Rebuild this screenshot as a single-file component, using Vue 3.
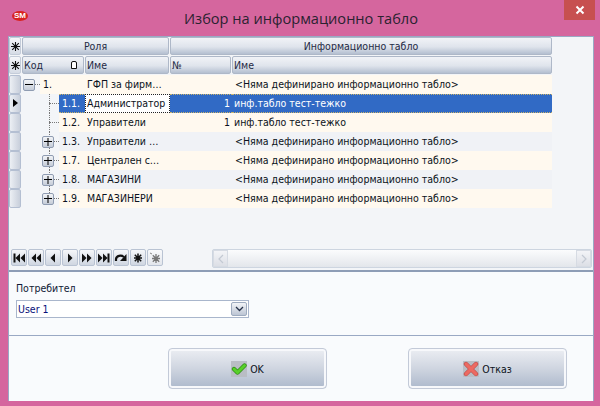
<script setup>
const rows = [
  { id: 'r1', code: '1.', name: 'ГФП за фирм…', num: '', dash: '<Няма дефинирано информационно табло>', level: 0, box: 'minus', tone: 'cream' },
  { id: 'r2', code: '1.1.', name: 'Администратор', num: '1', dash: 'инф.табло тест-тежко', level: 1, box: '', tone: 'sel', current: true },
  { id: 'r3', code: '1.2.', name: 'Управители', num: '1', dash: 'инф.табло тест-тежко', level: 1, box: '', tone: 'cream' },
  { id: 'r4', code: '1.3.', name: 'Управители …', num: '', dash: '<Няма дефинирано информационно табло>', level: 1, box: 'plus', tone: 'grey' },
  { id: 'r5', code: '1.7.', name: 'Централен с…', num: '', dash: '<Няма дефинирано информационно табло>', level: 1, box: 'plus', tone: 'cream' },
  { id: 'r6', code: '1.8.', name: 'МАГАЗИНИ', num: '', dash: '<Няма дефинирано информационно табло>', level: 1, box: 'plus', tone: 'grey' },
  { id: 'r7', code: '1.9.', name: 'МАГАЗИНЕРИ', num: '', dash: '<Няма дефинирано информационно табло>', level: 1, box: 'plus', tone: 'cream', last: true },
]
const navIcons = [
  'M1.500 2.500h2v9h-2zM8 2.500v9L3.500 7zM13 2.500v9L8.500 7z',
  'M7 2.500v9L2.500 7zM12 2.500v9L7.500 7z',
  'M9 2.500v9L4.500 7z',
  'M5 2.500v9L9.500 7z',
  'M2 2.500v9L6.500 7zM7 2.500v9L11.500 7z',
  'M1 2.500v9L5.500 7zM6 2.500v9L10.500 7zM10.500 2.500h2v9h-2z',
]
</script>

<template>
  <div class="window">
    <header class="titlebar">
      <span class="logo">SM</span>
      <h1 class="title">Избор на информационно табло</h1>
      <span class="close">
        <svg width="10" height="10" viewBox="0 0 10 10"><path d="M1.500 1.500l7 7M8.500 1.500l-7 7" stroke="#fff" stroke-width="2" /></svg>
      </span>
    </header>

    <main class="client">
      <section class="gridpanel">
        <div class="headrow">
          <span class="corner">
            <svg width="9" height="9" viewBox="0 0 9 9"><path d="M4.500 0v9M0 4.500h9M1.200 1.200l6.600 6.600M7.800 1.200L1.200 7.800" stroke="#111" stroke-width="1.100" /></svg>
          </span>
          <span class="hcell band-role">Роля</span>
          <span class="hcell band-dash">Информационно табло</span>
        </div>
        <div class="headrow">
          <span class="corner">
            <svg width="9" height="9" viewBox="0 0 9 9"><path d="M4.500 0v9M0 4.500h9M1.200 1.200l6.600 6.600M7.800 1.200L1.200 7.800" stroke="#111" stroke-width="1.100" /></svg>
          </span>
          <span class="hcell col-code left">Код<i class="sort"></i></span>
          <span class="hcell col-name left">Име</span>
          <span class="hcell col-num left">№</span>
          <span class="hcell col-dash left">Име</span>
        </div>

        <div v-for="r in rows" :key="r.id" class="row" :class="r.tone">
          <span class="ind"><i v-if="r.current" class="pointer"></i></span>
          <span class="gutter" :class="'lv' + r.level">
            <i v-if="r.level" class="vline" :class="{ short: r.last }"></i>
            <i class="hline"></i>
            <b v-if="r.box" class="box">
              <svg width="10" height="10" viewBox="0 0 10 10"><path :d="r.box === 'plus' ? 'M1 4.500h8M5 1v8' : 'M1 4.500h8'" stroke="#000" fill="none" /></svg>
            </b>
          </span>
          <span class="cell code">{{ r.code }}</span>
          <span class="cell name">{{ r.name }}</span>
          <span class="cell num">{{ r.num }}</span>
          <span class="cell dash" :class="{ linked: r.num }">{{ r.dash }}</span>
        </div>

        <div class="gridfoot">
          <div class="nav">
            <span v-for="d in navIcons" :key="d" class="navbtn">
              <svg width="14" height="14" viewBox="0 0 14 14"><path :d="d" fill="#111" /></svg>
            </span>
            <span class="navbtn">
              <svg width="14" height="14" viewBox="0 0 14 14"><path d="M2 10V8C2.500 4.800 7 3.500 10 6" fill="none" stroke="#111" stroke-width="2.200" /><path d="M12.500 3v7h-6.500z" fill="#111" /></svg>
            </span>
            <span class="navbtn">
              <svg width="10" height="10" viewBox="0 0 10 10"><path d="M5 .5v9M1 5h8M1.800 1.800l6.400 6.400M8.200 1.800L1.800 8.200" stroke="#111" stroke-width="1.500" /></svg>
            </span>
            <span class="navbtn off">
              <svg width="12" height="12" viewBox="0 0 12 12"><path d="M7 2v9M3 6.500h8M3.800 3.300l6.400 6.400M10.200 3.300L3.800 9.700" stroke="#777" stroke-width="1.300" /><path d="M1 1l2 1" stroke="#888" /></svg>
            </span>
          </div>
          <div class="scroll">
            <span class="arrow"><svg width="8" height="10" viewBox="0 0 8 10"><path d="M6 1L2 5l4 4" fill="none" stroke="#c3c9d3" stroke-width="1.200" /></svg></span>
            <span class="track"></span>
            <span class="arrow"><svg width="8" height="10" viewBox="0 0 8 10"><path d="M2 1l4 4-4 4" fill="none" stroke="#c3c9d3" stroke-width="1.200" /></svg></span>
          </div>
        </div>
      </section>

      <section class="userpanel">
        <label class="label">Потребител</label>
        <div class="combo">
          <span class="value">User 1</span>
          <span class="drop"><svg width="9" height="6" viewBox="0 0 9 6"><path d="M1 1l3.500 3.500L8 1" fill="none" stroke="#26324a" stroke-width="1.300" /></svg></span>
        </div>
      </section>

      <footer class="actions">
        <button class="btn ok">
          <span class="glyph">
            <svg width="16" height="16" viewBox="0 0 16 16"><path d="M3 8l3.500 3.500L13.500 4.500" fill="none" stroke="#2e8b14" stroke-width="4.400" stroke-linecap="round" stroke-linejoin="round" /><path d="M3 8l3.500 3.500L13.500 4.500" fill="none" stroke="#58d02a" stroke-width="3" stroke-linecap="round" stroke-linejoin="round" /></svg>
          </span>OK
        </button>
        <button class="btn">
          <span class="glyph">
            <svg width="16" height="16" viewBox="0 0 16 16"><path d="M3 3l10 10M13 3L3 13" fill="none" stroke="#b84a48" stroke-width="4.400" stroke-linecap="round" /><path d="M3 3l10 10M13 3L3 13" fill="none" stroke="#ec6a62" stroke-width="3.200" stroke-linecap="round" /></svg>
          </span>Отказ
        </button>
      </footer>
    </main>
  </div>
</template>

<style>
html, body { margin: 0; padding: 0; }
</style>

<style scoped>
.window {
  width: 600px;
  height: 406px;
  box-sizing: border-box;
  padding: 0 6px 5px 8px;
  background: #d5669e;
  display: flex;
  flex-direction: column;
  font-family: "DejaVu Sans Condensed", "DejaVu Sans", sans-serif;
  font-stretch: condensed;
  font-size: 10.500px;
  color: #0b1220;
  overflow: hidden;
}
.titlebar {
  position: relative;
  height: 36px;
  flex: none;
  display: flex;
  align-items: center;
  justify-content: center;
}
.logo {
  position: absolute;
  left: 4px;
  top: 11px;
  width: 16px;
  height: 10px;
  border-radius: 50%;
  background: #d8231f;
  color: #fff;
  font: bold 8px/10px "Liberation Sans", sans-serif;
  text-align: center;
}
.title {
  margin: 0;
  font-weight: 400;
  font-size: 14.600px;
  font-stretch: normal;
  color: #2b2230;
  font-family: "Open Sans", sans-serif;
}
.close {
  position: absolute;
  top: 0;
  right: -1px;
  width: 31px;
  height: 20px;
  background: #c75050;
  display: flex;
  align-items: center;
  justify-content: center;
}
.client {
  flex: 1;
  display: flex;
  flex-direction: column;
  background: #f9fbfd;
  border: 1px solid #9aa9c4;
  border-width: 1px 1px 0 1px;
  min-height: 0;
}
.gridpanel {
  height: 235px;
  flex: none;
  box-sizing: border-box;
  background: #f3f5f8;
  border-bottom: 2px solid #8e9db6;
  display: flex;
  flex-direction: column;
  position: relative;
}
.headrow { display: flex; height: 19px; width: 543px; flex: none; gap: 1px; }
.corner {
  width: 12px;
  height: 18px;
  flex: none;
  box-sizing: border-box;
  border: 1px solid #c4ccd9;
  border-radius: 2px;
  background: linear-gradient(#f6f7fa, #d6dce6);
  display: flex;
  align-items: center;
  justify-content: center;
}
.hcell {
  box-sizing: border-box;
  height: 18px;
  line-height: 16px;
  border: 1px solid #aeb8c8;
  border-radius: 2px;
  text-align: center;
  background: linear-gradient(#f1f3f7, #dfe4ec 55%, #b4bfd0);
  color: #1f2a44;
  position: relative;
  flex: none;
}
.left { text-align: left; padding-left: 1px; }
.band-role { width: 147px; }
.band-dash { width: 382px; }
.col-code { width: 62px; }
.col-name { width: 84px; }
.col-num { width: 61px; }
.col-dash { width: 320px; }
.sort {
  position: absolute;
  right: 6px;
  top: 4px;
  width: 4px;
  height: 6px;
  border: 1px solid #111;
  background: #fff;
  border-radius: 2px 2px 0 0;
}
.row { display: flex; height: 19px; width: 543px; flex: none; line-height: 19px; }
.ind {
  width: 12px;
  flex: none;
  box-sizing: border-box;
  border: 1px solid #b4bfd2;
  border-radius: 2px;
  background: linear-gradient(90deg, #eceff4, #c8cfdb);
  position: relative;
}
.pointer {
  position: absolute;
  left: 3px;
  top: 4px;
  border-left: 5px solid #000;
  border-top: 4px solid transparent;
  border-bottom: 4px solid transparent;
}
.gutter { flex: none; position: relative; background: #f3f5f8; }
.lv0 { width: 19px; }
.lv1 { width: 38px; }
.vline {
  position: absolute;
  left: 28px;
  top: 0;
  bottom: 0;
  border-left: 1px dotted #777;
}
.vline.short { bottom: 9px; }
.hline {
  position: absolute;
  top: 9px;
  right: 0;
  width: 10px;
  border-top: 1px dotted #777;
}
.box {
  position: absolute;
  top: 4px;
  right: 5px;
  box-sizing: border-box;
  width: 12px;
  height: 12px;
  border: 1px solid #8f9cb2;
  border-radius: 2px;
  background: linear-gradient(#f2f4f7, #c5ccd8);
  display: flex;
}
.cell { white-space: nowrap; overflow: hidden; box-sizing: border-box; flex: none; }
.code { flex: 1 1 0; padding-left: 3px; }
.name { width: 85px; padding-left: 2px; }
.num { width: 62px; padding-right: 2px; text-align: right; }
.dash { width: 320px; padding-left: 3px; }
.dash.linked { padding-left: 2px; }
.cream .cell { background: #fff9ef; }
.grey .cell { background: #f0f2f6; }
.sel .cell {
  background: #316ac5;
  color: #fff;
  line-height: 17px;
  border-top: 1px dotted #c9b36a;
  border-bottom: 1px dotted #c9b36a;
}
.sel .name { background: #fff; color: #0b1220; border: 1px dotted #222; padding-left: 1px; }
.gridfoot {
  margin-top: auto;
  height: 21px;
  display: flex;
  align-items: flex-start;
  padding-left: 2px;
}
.nav { display: flex; gap: 1px; width: 201px; flex: none; }
.navbtn {
  box-sizing: border-box;
  width: 16px;
  height: 17px;
  border: 1px solid #b9c3d3;
  border-radius: 2px;
  background: linear-gradient(#f6f7fa, #cfd6e1);
  display: flex;
  align-items: center;
  justify-content: center;
}
.navbtn.off { background: linear-gradient(#f8f9fb, #e3e6ec); }
.scroll {
  width: 380px;
  height: 19px;
  box-sizing: border-box;
  border: 1px solid #cdd5e0;
  border-radius: 2px;
  display: flex;
  background: linear-gradient(#fbfcfd, #e3e6eb);
}
.track { flex: 1; }
.arrow {
  width: 15px;
  flex: none;
  box-sizing: border-box;
  border: 1px solid #d6dbe3;
  background: linear-gradient(#f3f4f7, #dcdfe6);
  display: flex;
  align-items: center;
  justify-content: center;
}
.userpanel {
  height: 64px;
  flex: none;
  box-sizing: border-box;
  border-bottom: 1px solid #9aa9c4;
  padding: 8px 0 0 7px;
  background: #f9fbfd;
}
.label { display: block; line-height: 16px; color: #101a35; }
.combo {
  margin-top: 4px;
  width: 233px;
  height: 18px;
  box-sizing: border-box;
  border: 1px solid #a9b6cc;
  background: #fff;
  display: flex;
  align-items: center;
  justify-content: space-between;
  padding: 0 1px 0 1px;
  color: #08107a;
}
.drop {
  width: 16px;
  height: 14px;
  box-sizing: border-box;
  border: 1px solid #9eabbf;
  border-radius: 2px;
  background: linear-gradient(#f2f4f7, #bcc5d4);
  display: flex;
  align-items: center;
  justify-content: center;
}
.actions {
  flex: 1;
  display: flex;
  justify-content: flex-start;
  gap: 81px;
  padding: 12px 0 0 159px;
}
.btn {
  width: 159px;
  height: 41px;
  box-sizing: border-box;
  border: 1px solid #c3cad8;
  border-radius: 4px;
  padding: 0;
  background: linear-gradient(#eceef3, #cfd5e0 50%, #adb9cc);
  box-shadow: inset 0 0 0 2px #f7f8fb;
  display: flex;
  align-items: center;
  justify-content: center;
  gap: 3px;
  font: inherit;
  color: #0b1220;
}
.glyph {
  width: 16px;
  height: 16px;
  background: #b9bdc4;
  display: flex;
}
</style>
